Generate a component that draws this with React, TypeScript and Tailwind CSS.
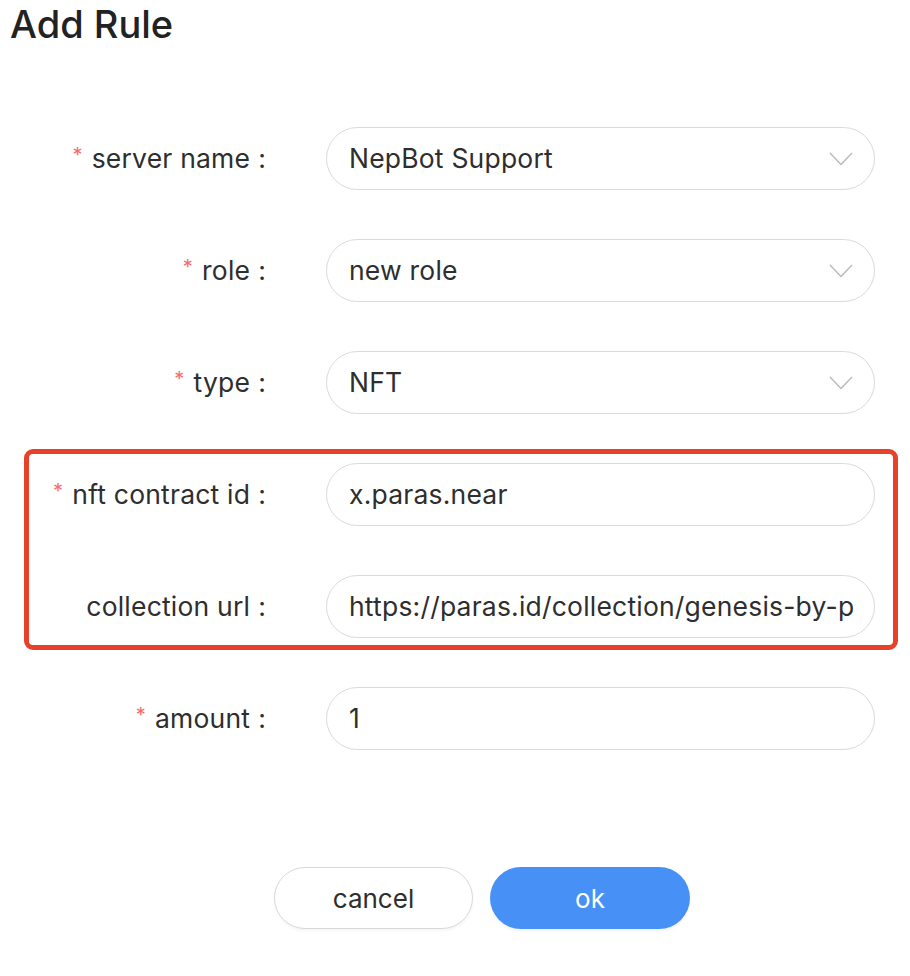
import React from "react";

const font = { fontFamily: "Inter, 'Noto Sans', sans-serif" };

function Chevron() {
  return (
    <svg width="24" height="14" viewBox="0 0 24 14" fill="none" className="shrink-0">
      <polyline points="1,1 12,12.5 23,1" stroke="#bdbdbd" strokeWidth="1.6" strokeLinejoin="round" />
    </svg>
  );
}

function Label({ text, required }: { text: string; required?: boolean }) {
  return (
    <div className="w-[243px] shrink-0 flex items-center justify-end text-[26.5px] tracking-[0.2px] text-[#2e2e2e]">
      {required && <span className="text-[#f56c6c] text-[20px] mr-[9px] -mt-[8px]">*</span>}
      <span>{text}</span>
      <span className="ml-[8px] mr-[6px]">:</span>
    </div>
  );
}

function Field({ value, select }: { value: string; select?: boolean }) {
  return (
    <div className="ml-[54px] w-[549px] h-[63px] shrink-0 rounded-full border-[1.5px] border-[#dadada] flex items-center pl-[22px] pr-[21px] bg-white">
      <span className="flex-1 overflow-hidden whitespace-nowrap text-[26.5px] tracking-[0.2px] text-[#2e2e2e]">{value}</span>
      {select && <Chevron />}
    </div>
  );
}

function Row({ label, value, required, select, className = "" }: { label: string; value: string; required?: boolean; select?: boolean; className?: string }) {
  return (
    <div className={`flex items-center ${className}`}>
      <Label text={label} required={required} />
      <Field value={value} select={select} />
    </div>
  );
}

export default function App() {
  return (
    <div className="min-h-screen w-[910px] bg-white" style={font}>
      <h1 className="pl-[10px] pt-[5px] text-[38px] leading-none font-medium text-[#222]">Add Rule</h1>

      <div className="ml-[24px] w-[874px] flex flex-col mt-[84px]">
        <div className="pl-[5px]">
          <Row label="server name" value="NepBot Support" required select />
          <Row className="mt-[49px]" label="role" value="new role" required select />
          <Row className="mt-[49px]" label="type" value="NFT" required select />
        </div>

        <div className="mt-[35px] border-[5px] border-[#e8412b] rounded-[9px] pt-[9px] pb-[7px]">
          <Row label="nft contract id" value="x.paras.near" required />
          <Row className="mt-[49px]" label="collection url" value="https://paras.id/collection/genesis-by-paras" />
        </div>

        <div className="pl-[5px] mt-[37px]">
          <Row label="amount" value="1" required />
        </div>

        <div className="flex mt-[117px] pl-[250px] gap-[17px]">
          <button className="w-[199px] h-[62px] rounded-full border-[1.5px] border-[#d9d9d9] bg-white text-[26px] text-[#2e2e2e] shadow-[0_2px_3px_rgba(0,0,0,0.04)]">
            cancel
          </button>
          <button className="w-[200px] h-[62px] rounded-full bg-[#4690f6] text-[26px] text-white shadow-[0_2px_3px_rgba(0,0,0,0.06)]">
            ok
          </button>
        </div>
      </div>
    </div>
  );
}
